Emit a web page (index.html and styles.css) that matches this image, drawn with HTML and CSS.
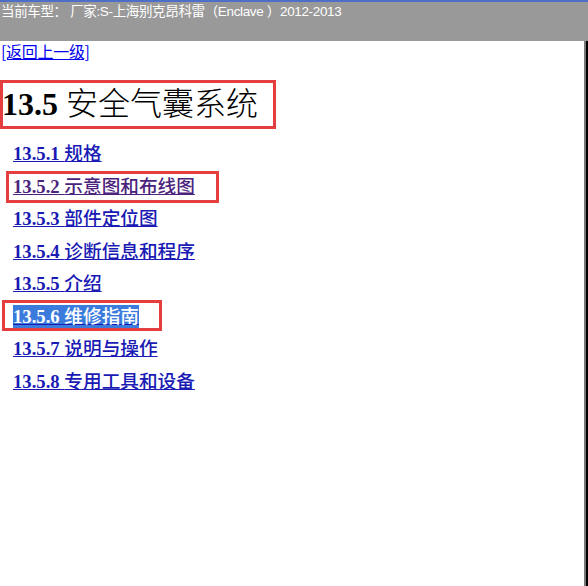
FILE: index.html
```html
<!DOCTYPE html>
<html>
<head>
<meta charset="utf-8">
<link rel="stylesheet" href="styles.css">
</head>
<body>
<div class="header">当前车型： 厂家:S-上海别克昂科雷（Enclave ）2012-2013</div>
<div class="main">
  <div class="content">
    <a class="back" href="#">[返回上一级]</a>
    <h1 class="title">13.5 <span class="cjk">安全气囊系统</span></h1>
    <div class="list">
      <a class="item" href="#">13.5.1 <span class="cjk">规格</span></a>
      <a class="item visited" href="#">13.5.2 <span class="cjk">示意图和布线图</span></a>
      <a class="item" href="#">13.5.3 <span class="cjk">部件定位图</span></a>
      <a class="item" href="#">13.5.4 <span class="cjk">诊断信息和程序</span></a>
      <a class="item" href="#">13.5.5 <span class="cjk">介绍</span></a>
      <a class="item"><span class="sel">13.5.6 <span class="cjk">维修指南</span></span></a>
      <a class="item" href="#">13.5.7 <span class="cjk">说明与操作</span></a>
      <a class="item" href="#">13.5.8 <span class="cjk">专用工具和设备</span></a>
    </div>
  </div>
  <div class="edge"></div>
</div>
<div class="mark mark-title"></div>
<div class="mark mark-2"></div>
<div class="mark mark-6"></div>
</body>
</html>
```

FILE: styles.css
```css
html, body {
  margin: 0;
  padding: 0;
  background: #fff;
}
body {
  width: 588px;
  height: 586px;
  overflow: hidden;
  display: flex;
  flex-direction: column;
}
.header {
  height: 39px;
  border-top: 2px solid #4d6fc8;
  background: #999999;
  color: #fff;
  font-family: "Liberation Sans", "Noto Sans CJK SC", sans-serif;
  font-size: 13.5px;
  line-height: 19px;
  padding-left: 1px;
  letter-spacing: -0.35px;
  white-space: nowrap;
  box-sizing: content-box;
}
.main {
  flex: 1;
  display: flex;
}
.content {
  flex: 1;
  display: flex;
  flex-direction: column;
  align-items: flex-start;
}
.edge {
  width: 2px;
  border-left: 2px solid #7a7a7a;
  background: #000;
}
.back {
  font-family: "Noto Sans CJK SC", sans-serif;
  font-size: 16px;
  line-height: 20px;
  color: #0000ee;
  padding-left: 1px;
  letter-spacing: -0.3px;
}
.title {
  margin: 20px 0 0 2px;
  font-family: "Liberation Serif", serif;
  font-size: 32px;
  line-height: 40px;
  font-weight: bold;
  color: #000;
  white-space: nowrap;
}
.title .cjk {
  font-weight: 300;
  font-family: "Noto Sans CJK SC", serif;
}
.cjk {
  font-family: "Noto Sans CJK SC", sans-serif;
}
.list {
  margin-top: 18px;
  display: flex;
  flex-direction: column;
  align-items: flex-start;
  padding-left: 13px;
}
.item {
  display: block;
  height: 32.57px;
  font-family: "Liberation Serif", serif;
  font-size: 18.67px;
  line-height: 24px;
  font-weight: bold;
  color: #1a1ab4;
  text-decoration: underline;
  white-space: nowrap;
}
.item .cjk {
  font-weight: 500;
  line-height: 1;
}
.item.visited {
  color: #4b237d;
}
.sel {
  background: #3b7bdc;
  color: #fff;
  padding: 1px 0;
}
.mark {
  position: absolute;
  border: 3px solid #e53e3e;
  box-sizing: border-box;
}
.mark-title {
  left: 0;
  top: 80px;
  width: 276px;
  height: 49px;
}
.mark-2 {
  left: 6px;
  top: 171px;
  width: 213px;
  height: 32px;
}
.mark-6 {
  left: 2px;
  top: 300px;
  width: 160px;
  height: 31px;
}
```
